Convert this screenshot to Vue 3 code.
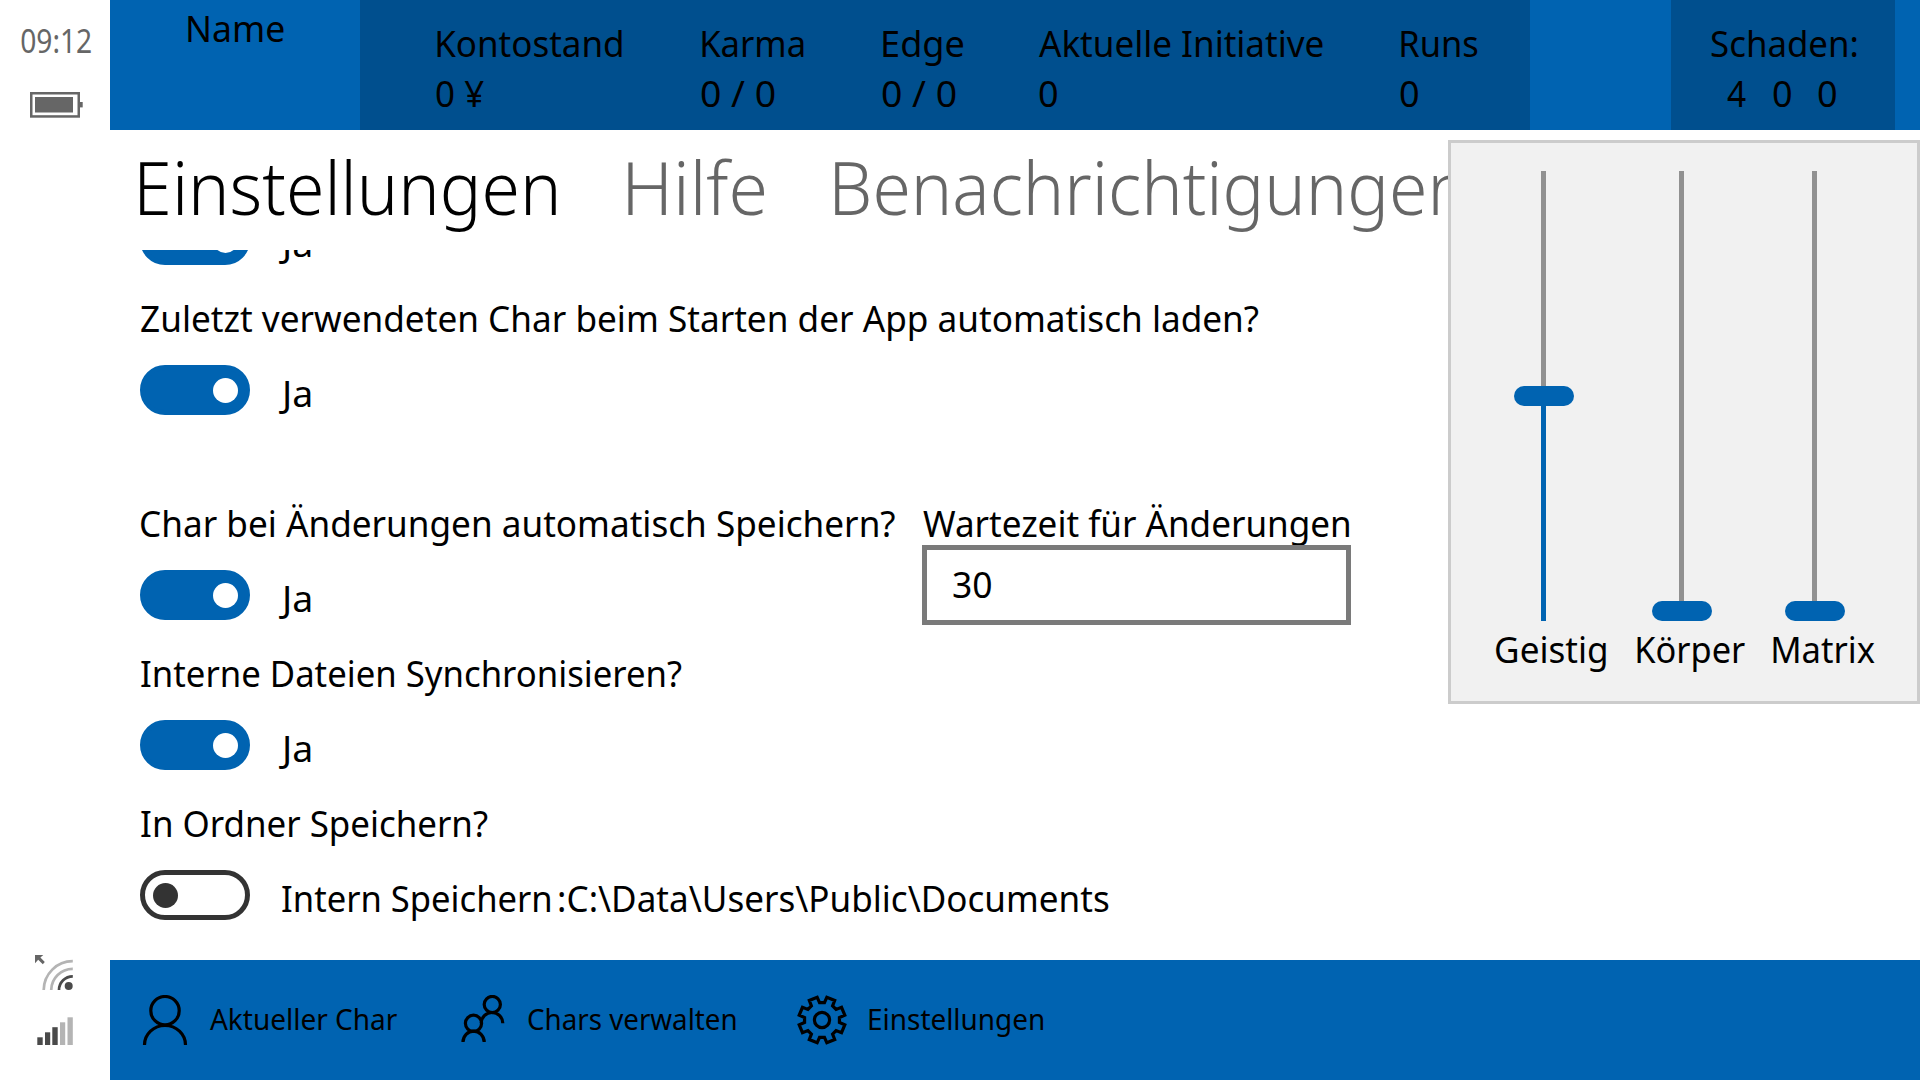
<script setup>
import { h } from 'vue'

const FAMILY = '"Noto Sans", "Open Sans", sans-serif'
const ctx = document.createElement('canvas').getContext('2d')

/* A single line of text whose drawn glyphs span exactly `w` pixels. */
const FitText = (props) => {
  const size = props.size || 37
  const weight = props.weight || 370
  ctx.font = `${weight} ${size}px ${FAMILY}`
  const m = ctx.measureText(props.text)
  const scale = props.w / (m.actualBoundingBoxRight + m.actualBoundingBoxLeft)
  return h('span', { class: 'fit', style: { width: `${props.w}px`, fontSize: `${size}px`, fontWeight: weight } }, [
    h('span', {
      class: 'fit-inner',
      style: { transform: `translateY(1px) scaleX(${scale.toFixed(4)}) translateX(${m.actualBoundingBoxLeft.toFixed(2)}px)` },
    }, props.text),
  ])
}
FitText.props = ['text', 'w', 'size', 'weight']

const stats = [
  { label: 'Kontostand', w: 185, value: '0 ¥', vw: 48 },
  { label: 'Karma', w: 101.5, value: '0 / 0', vw: 74 },
  { label: 'Edge', w: 80, value: '0 / 0', vw: 74 },
  { label: 'Aktuelle Initiative', w: 283.5, value: '0', vw: 18.5 },
  { label: 'Runs', w: 77, value: '0', vw: 18.5 },
]

const damage = [
  { label: 'Geistig', w: 110, value: 4, vw: 19, offset: 18.3, thumb: 215 },
  { label: 'Körper', w: 108, value: 0, vw: 18.5, offset: 14.7, thumb: 430 },
  { label: 'Matrix', w: 101.5, value: 0, vw: 18.5, offset: 11.7, thumb: 430 },
]

const gear = Array.from({ length: 8 }, (_, k) =>
  [[17.6, -8], [17.6, 8], [23.3, 12], [23.3, 33]].map(([r, d]) => {
    const a = ((k * 45 + d) * Math.PI) / 180
    return `${(25 + r * Math.sin(a)).toFixed(2)},${(25 - r * Math.cos(a)).toFixed(2)}`
  }).join(' ')
).join(' ')
</script>

<template>
  <div class="screen">
    <aside class="status">
      <div class="status-top">
        <FitText text="09:12" :w="70.5" :size="33" :weight="370" />
        <svg class="battery" width="53" height="26" viewBox="0 0 53 26">
          <rect x="1.25" y="1.25" width="47.5" height="23.2" fill="none" stroke="#666" stroke-width="2.5" />
          <rect x="5" y="5" width="38" height="15.5" fill="#666" />
          <rect x="50" y="10" width="2.7" height="5.4" fill="#666" />
        </svg>
      </div>
      <svg class="signals" width="50" height="100" viewBox="0 0 50 100">
        <path d="M5 5h8.3l-2.9 2.6 4.4 4.4-2 2.2-4.6-4.5L5 13.3z" fill="#666" />
        <g fill="none" stroke="#b4b4b4" stroke-width="2.7">
          <path d="M13.7 40A29 29 0 0 1 42.8 11.2" />
          <path d="M21.2 40A21.5 21.5 0 0 1 42.8 18.8" />
          <path d="M29 40A13.8 13.8 0 0 1 42.8 26.3" stroke="#4a4a4a" />
        </g>
        <circle cx="38.7" cy="36" r="4" fill="#4a4a4a" />
        <g fill="#4a4a4a">
          <rect x="7.3" y="87.3" width="5.4" height="7.7" />
          <rect x="15" y="82.3" width="5.2" height="12.7" />
          <rect x="22.3" y="77.2" width="5.4" height="17.8" />
        </g>
        <g fill="#b4b4b4">
          <rect x="30" y="72.3" width="5.2" height="22.7" />
          <rect x="37.5" y="67.3" width="5.3" height="27.7" />
        </g>
      </svg>
    </aside>

    <div class="app">
      <header class="header">
        <div class="name"><FitText text="Name" :w="95.5" /></div>
        <div class="stats">
          <div v-for="s in stats" :key="s.label" class="stat">
            <FitText :text="s.label" :w="s.w" />
            <FitText class="value" :text="s.value" :w="s.vw" />
          </div>
        </div>
        <div class="damage">
          <FitText text="Schaden:" :w="146" />
          <div class="damage-values">
            <FitText v-for="d in damage" :key="d.label" :text="String(d.value)" :w="d.vw" />
          </div>
        </div>
      </header>

      <nav class="tabs">
        <FitText text="Einstellungen" :w="416" :size="73.5" :weight="330" />
        <FitText class="muted" text="Hilfe" :w="136.5" :size="73.5" :weight="330" />
        <FitText class="muted" text="Benachrichtigungen" :w="628.5" :size="73.5" :weight="330" />
      </nav>

      <main class="content">
        <div class="list">
          <div class="toggle-row">
            <span class="toggle on"><i /></span>
            <FitText text="Ja" :w="31.5" />
          </div>

          <section class="setting">
            <FitText class="label" text="Zuletzt verwendeten Char beim Starten der App automatisch laden?" :w="1118" />
            <div class="toggle-row">
              <span class="toggle on"><i /></span>
              <FitText text="Ja" :w="31.5" />
            </div>
          </section>

          <section class="setting split">
            <div class="split-left">
              <FitText class="label" text="Char bei Änderungen automatisch Speichern?" :w="754.5" />
              <div class="toggle-row">
                <span class="toggle on"><i /></span>
                <FitText text="Ja" :w="31.5" />
              </div>
            </div>
            <div class="delay">
              <FitText class="delay-label" text="Wartezeit für Änderungen" :w="426" />
              <div class="input"><FitText text="30" :w="38.5" /></div>
            </div>
          </section>

          <section class="setting">
            <FitText class="label" text="Interne Dateien Synchronisieren?" :w="541" />
            <div class="toggle-row">
              <span class="toggle on"><i /></span>
              <FitText text="Ja" :w="31.5" />
            </div>
          </section>

          <section class="setting">
            <FitText class="label" text="In Ordner Speichern?" :w="347" />
            <div class="toggle-row off-row">
              <span class="toggle"><i /></span>
              <FitText text="Intern Speichern" :w="268" />
              <FitText text=":C:\Data\Users\Public\Documents" :w="550" />
            </div>
          </section>
        </div>
      </main>

      <footer class="bar">
        <div class="bar-item">
          <svg width="50" height="50" viewBox="0 0 50 50" fill="none" stroke="#000" stroke-width="3.2">
            <circle cx="25" cy="15.7" r="14.2" />
            <path d="M4.5 50A20.5 19.5 0 0 1 45.5 50" />
          </svg>
          <FitText text="Aktueller Char" :w="187" :size="29.5" />
        </div>
        <div class="bar-item">
          <svg width="50" height="50" viewBox="0 0 50 50" fill="none" stroke="#000" stroke-width="3.2">
            <circle cx="34.3" cy="9.5" r="8.1" />
            <circle cx="15.5" cy="28.3" r="8.1" />
            <path d="M5 47A10.6 10.8 0 0 1 26.2 47" />
            <path d="M23.2 28.3A10.8 10.8 0 0 1 44.8 28.3" />
          </svg>
          <FitText text="Chars verwalten" :w="207.5" :size="29.5" />
        </div>
        <div class="bar-item">
          <svg width="50" height="50" viewBox="0 0 50 50" fill="none" stroke="#000" stroke-width="3.2">
            <polygon :points="gear" />
            <circle cx="25" cy="25" r="7.6" />
          </svg>
          <FitText text="Einstellungen" :w="174" :size="29.5" />
        </div>
      </footer>
    </div>

    <div class="flyout">
      <div v-for="d in damage" :key="d.label" class="column">
        <div class="slider" :style="{ marginLeft: d.offset + 'px' }">
          <span class="rest" :style="{ height: d.thumb + 'px' }" />
          <span class="thumb" />
          <span class="filled" />
        </div>
        <FitText :text="d.label" :w="d.w" />
      </div>
    </div>
  </div>
</template>

<style>
body { margin: 0; background: #fff; }
.fit { display: block; flex: none; white-space: nowrap; line-height: 50px; }
.fit-inner { display: block; width: max-content; transform-origin: 0 50%; }
</style>

<style scoped>
.screen {
  position: relative;
  display: flex;
  width: 1920px;
  height: 1080px;
  overflow: hidden;
  background: #fff;
  color: #000;
  font-family: "Noto Sans", "Open Sans", sans-serif;
}
.status {
  flex: none;
  width: 110px;
  box-sizing: border-box;
  padding: 20px 0 30px;
  display: flex;
  flex-direction: column;
  justify-content: space-between;
  color: #666;
}
.status-top .fit { margin-left: 21px; line-height: 40px; }
.battery { display: block; margin: 32px 0 0 30px; }
.signals { display: block; margin-left: 30px; }
.app { flex: none; width: 1810px; display: flex; flex-direction: column; }

.header { flex: none; height: 130px; display: flex; background: #0063b1; }
.name { width: 250px; box-sizing: border-box; padding: 2px 0 0 77.8px; }
.stats {
  width: 1170px;
  box-sizing: border-box;
  padding: 17px 0 0 77px;
  display: grid;
  grid-template-columns: 265px 181px 156px 362px 1fr;
  background: #004f8e;
}
.value { margin-left: -1.5px; }
.stat:nth-child(4) .value { margin-left: 0; }
.damage {
  width: 224px;
  box-sizing: border-box;
  margin-left: 141px;
  padding: 17px 0 0 39.5px;
  background: #004f8e;
}
.damage-values { display: flex; gap: 27px; padding-left: 16px; }

.tabs { flex: none; height: 120px; display: flex; padding-left: 30px; }
.tabs .fit { line-height: 110px; margin-top: 1px; }
.tabs .fit:nth-child(2) { margin-left: 72px; }
.tabs .fit:nth-child(3) { margin-left: 70px; }
.muted { color: #666; }

.content { flex: none; height: 710px; overflow: hidden; }
.list { margin-top: -35px; padding-left: 30px; }
.toggle-row { display: flex; height: 50px; }
.toggle-row .fit { padding-top: 2px; margin-left: 28.5px; }
.off-row .fit { margin-left: 31.5px; }
.off-row .fit + .fit { margin-left: 9.5px; }
.toggle {
  flex: none;
  box-sizing: border-box;
  width: 110px;
  height: 50px;
  border: 5px solid #333;
  border-radius: 25px;
  display: flex;
  align-items: center;
  padding: 0 8px;
}
.toggle i { width: 25px; height: 25px; border-radius: 50%; background: #333; }
.toggle.on { border-color: #0063b1; background: #0063b1; justify-content: flex-end; padding-right: 7px; }
.toggle.on i { background: #fff; }
.setting { height: 123px; margin-top: 27px; }
.label { margin: 0 0 23px 1px; }
.split { margin-top: 82px; display: flex; }
.split-left { width: 782px; }
.delay-label { margin: 0 0 -2px 0.5px; }
.input {
  position: relative;
  box-sizing: border-box;
  width: 429px;
  height: 80px;
  border: 5px solid #7a7a7a;
  background: #fff;
  padding: 8px 0 0 26px;
}

.bar { flex: none; height: 120px; display: flex; align-items: center; padding-left: 30px; background: #0063b1; }
.bar-item { display: flex; align-items: center; gap: 20px; }
.bar-item + .bar-item { margin-left: 61px; }
.bar-item:nth-child(3) { gap: 22px; }
.bar-item .fit { line-height: 40px; margin-top: -5px; }

.flyout {
  position: absolute;
  left: 1448px;
  top: 140px;
  box-sizing: border-box;
  width: 472px;
  height: 564px;
  border: 3px solid #ccc;
  background: #f1f1f1;
  padding: 28px 0 0 44.7px;
  display: flex;
}
.column:nth-child(1) { width: 141.6px; }
.column:nth-child(2) { width: 136px; }
.column .fit { margin-top: 2px; }
.slider { width: 60px; height: 450px; display: flex; flex-direction: column; align-items: center; }
.rest { flex: none; width: 5px; background: #919191; }
.thumb { flex: none; width: 60px; height: 20px; border-radius: 10px; background: #0063b1; }
.filled { flex: 1; width: 5px; background: #0063b1; }
</style>
